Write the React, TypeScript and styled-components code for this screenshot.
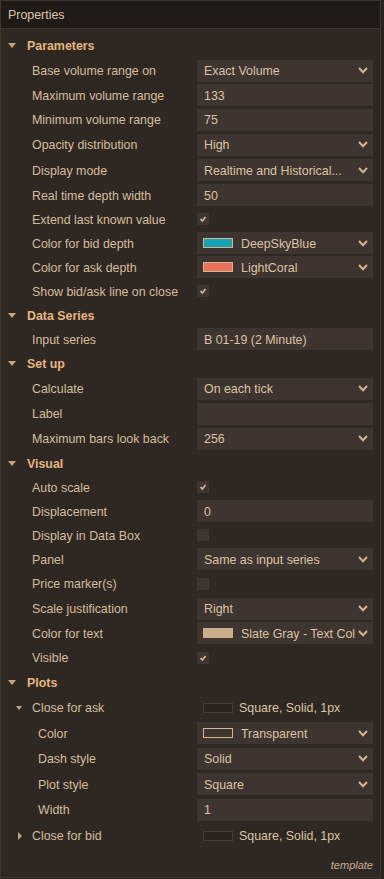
import React from 'react';
import styled, { createGlobalStyle } from 'styled-components';

const GlobalStyle = createGlobalStyle`
  html, body { margin: 0; padding: 0; background: #28221d; }
  body { font-family: "Liberation Sans", Arial, sans-serif; font-size: 12.4px; }
  * { box-sizing: border-box; }
`;

const Panel = styled.div`
  width: 381px;
  height: 878px;
  border: 1px solid #3d352e;
  background: #2f2822;
  display: flex;
  flex-direction: column;
`;

const TitleBar = styled.div`
  flex: 0 0 28px;
  background: #1f1a16;
  border-bottom: 1px solid #3d352e;
  display: flex;
  align-items: center;
  padding-left: 7px;
  color: #d9c7ab;
`;

const Body = styled.div`
  flex: 1;
  padding-top: 4px;
  display: flex;
  flex-direction: column;
`;

const Row = styled.div<{ $h: number }>`
  height: ${p => p.$h}px;
  display: grid;
  grid-template-columns: 196px 176px;
  align-items: center;
`;

const SectionRow = styled.div<{ $h: number }>`
  height: ${p => p.$h}px;
  display: flex;
  align-items: center;
  padding-left: 7px;
  color: #e6b680;
  font-weight: bold;
`;

const DownTri = styled.span<{ $w: number; $t: number }>`
  width: 0;
  height: 0;
  border-left: ${p => p.$w / 2}px solid transparent;
  border-right: ${p => p.$w / 2}px solid transparent;
  border-top: ${p => p.$t}px solid #c8a47c;
`;

const RightTri = styled.span`
  width: 0;
  height: 0;
  margin-left: 2px;
  border-top: 4px solid transparent;
  border-bottom: 4px solid transparent;
  border-left: 4px solid #c8a47c;
`;

const SectionText = styled.span`
  margin-left: 11px;
  padding-top: 1px;
`;

const Label = styled.div<{ $indent: number }>`
  padding-left: ${p => p.$indent}px;
  padding-top: 1px;
  color: #d5bd9c;
  white-space: nowrap;
  display: flex;
  align-items: center;
`;

const SubToggle = styled.span<{ $w: number }>`
  display: inline-flex;
  justify-content: flex-start;
  width: ${p => p.$w}px;
`;

const Field = styled.div`
  height: 22px;
  background: #3e3530;
  padding: 0 5px 0 7px;
  display: flex;
  align-items: center;
  color: #dbc3a3;
  white-space: nowrap;
  overflow: hidden;
`;

const ColorField = styled(Field)`
  padding-left: 6px;
`;

const FieldText = styled.span<{ $gap?: number }>`
  flex: 1;
  overflow: hidden;
  padding-top: 1px;
  margin-right: ${p => p.$gap ?? 0}px;
`;

const Swatch = styled.span<{ $fill: string; $edge: string }>`
  flex: 0 0 30px;
  height: 10px;
  background: ${p => p.$fill};
  border: 1px solid ${p => p.$edge};
  margin-right: 8px;
`;

const Summary = styled.div`
  display: flex;
  align-items: center;
  padding-left: 6px;
  padding-top: 1px;
  color: #dbc3a3;
  white-space: nowrap;
`;

const SummarySwatch = styled.span`
  width: 30px;
  height: 10px;
  background: #2a231e;
  border: 1px solid #463c35;
  margin-right: 6px;
`;

const CheckBox = styled.span`
  width: 12px;
  height: 12px;
  background: #3f3631;
  display: flex;
  align-items: center;
  justify-content: center;
`;

const Footer = styled.div`
  flex: 1;
  padding: 11px 7px 0 0;
  text-align: right;
  font-style: italic;
  font-size: 11px;
  line-height: 13px;
  color: #c7ae92;
`;

const Chevron = () => (
  <svg width="10" height="7" viewBox="0 0 10 7" style={{ flex: '0 0 10px' }}>
    <polyline points="1,1 5,5.3 9,1" fill="none" stroke="#d2b38c" strokeWidth="2" />
  </svg>
);

const Check = () => (
  <svg width="10" height="10" viewBox="0 0 10 10">
    <polyline points="2.5,5 4.3,7 7.5,3" fill="none" stroke="#d8bc98" strokeWidth="1.6" />
  </svg>
);

type Item =
  | { k: 'section'; text: string; h: number }
  | { k: 'select'; label: string; value: string; h: number; indent?: number }
  | { k: 'text'; label: string; value: string; h: number; indent?: number }
  | { k: 'check'; label: string; value: boolean; h: number }
  | { k: 'color'; label: string; value: string; fill: string; edge: string; h: number; indent?: number }
  | { k: 'sub'; label: string; open: boolean; h: number };

const items: Item[] = [
  { k: 'section', text: 'Parameters', h: 25 },
  { k: 'select', label: 'Base volume range on', value: 'Exact Volume', h: 25 },
  { k: 'text', label: 'Maximum volume range', value: '133', h: 24 },
  { k: 'text', label: 'Minimum volume range', value: '75', h: 25 },
  { k: 'select', label: 'Opacity distribution', value: 'High', h: 25 },
  { k: 'select', label: 'Display mode', value: 'Realtime and Historical...', h: 26 },
  { k: 'text', label: 'Real time depth width', value: '50', h: 24 },
  { k: 'check', label: 'Extend last known value', value: true, h: 24 },
  { k: 'color', label: 'Color for bid depth', value: 'DeepSkyBlue', fill: '#16a3b6', edge: '#d3b48e', h: 24 },
  { k: 'color', label: 'Color for ask depth', value: 'LightCoral', fill: '#e9705a', edge: '#d3b48e', h: 24 },
  { k: 'check', label: 'Show bid/ask line on close', value: true, h: 24 },
  { k: 'section', text: 'Data Series', h: 24 },
  { k: 'text', label: 'Input series', value: 'B 01-19 (2 Minute)', h: 24 },
  { k: 'section', text: 'Set up', h: 25 },
  { k: 'select', label: 'Calculate', value: 'On each tick', h: 25 },
  { k: 'text', label: 'Label', value: '', h: 25 },
  { k: 'select', label: 'Maximum bars look back', value: '256', h: 25 },
  { k: 'section', text: 'Visual', h: 24 },
  { k: 'check', label: 'Auto scale', value: true, h: 24 },
  { k: 'text', label: 'Displacement', value: '0', h: 24 },
  { k: 'check', label: 'Display in Data Box', value: false, h: 24 },
  { k: 'select', label: 'Panel', value: 'Same as input series', h: 24 },
  { k: 'check', label: 'Price marker(s)', value: false, h: 25 },
  { k: 'select', label: 'Scale justification', value: 'Right', h: 25 },
  { k: 'color', label: 'Color for text', value: 'Slate Gray - Text Color', fill: '#cbad8a', edge: '#cbad8a', h: 24 },
  { k: 'check', label: 'Visible', value: true, h: 25 },
  { k: 'section', text: 'Plots', h: 25 },
  { k: 'sub', label: 'Close for ask', open: true, h: 25 },
  { k: 'color', label: 'Color', value: 'Transparent', fill: 'transparent', edge: '#d3b48e', h: 26, indent: 37 },
  { k: 'select', label: 'Dash style', value: 'Solid', h: 25, indent: 37 },
  { k: 'select', label: 'Plot style', value: 'Square', h: 26, indent: 37 },
  { k: 'text', label: 'Width', value: '1', h: 25, indent: 37 },
  { k: 'sub', label: 'Close for bid', open: false, h: 26 },
];

function renderItem(it: Item, i: number) {
  switch (it.k) {
    case 'section':
      return (
        <SectionRow key={i} $h={it.h}>
          <DownTri $w={8} $t={5} />
          <SectionText>{it.text}</SectionText>
        </SectionRow>
      );
    case 'sub':
      return (
        <Row key={i} $h={it.h}>
          <Label $indent={15}>
            <SubToggle $w={16}>{it.open ? <DownTri $w={6} $t={4} /> : <RightTri />}</SubToggle>
            {it.label}
          </Label>
          <Summary>
            <SummarySwatch />
            Square, Solid, 1px
          </Summary>
        </Row>
      );
    case 'select':
      return (
        <Row key={i} $h={it.h}>
          <Label $indent={it.indent ?? 31}>{it.label}</Label>
          <Field>
            <FieldText>{it.value}</FieldText>
            <Chevron />
          </Field>
        </Row>
      );
    case 'text':
      return (
        <Row key={i} $h={it.h}>
          <Label $indent={it.indent ?? 31}>{it.label}</Label>
          <Field>
            <FieldText>{it.value}</FieldText>
          </Field>
        </Row>
      );
    case 'check':
      return (
        <Row key={i} $h={it.h}>
          <Label $indent={31}>{it.label}</Label>
          <CheckBox>{it.value ? <Check /> : null}</CheckBox>
        </Row>
      );
    case 'color':
      return (
        <Row key={i} $h={it.h}>
          <Label $indent={it.indent ?? 31}>{it.label}</Label>
          <ColorField>
            <Swatch $fill={it.fill} $edge={it.edge} />
            <FieldText $gap={3}>{it.value}</FieldText>
            <Chevron />
          </ColorField>
        </Row>
      );
  }
}

export default function App() {
  return (
    <>
      <GlobalStyle />
      <Panel>
        <TitleBar>Properties</TitleBar>
        <Body>
          {items.map(renderItem)}
          <Footer>template</Footer>
        </Body>
      </Panel>
    </>
  );
}
